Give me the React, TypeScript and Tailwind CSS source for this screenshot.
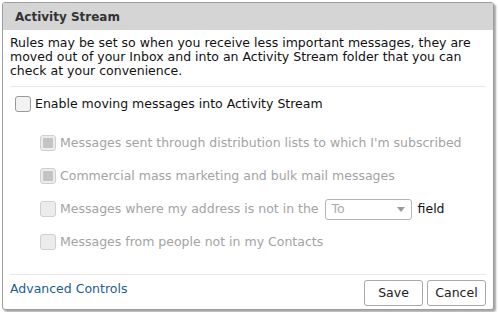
import React from 'react'

function Check({ checked, disabled }: { checked?: boolean; disabled?: boolean }) {
  return (
    <span
      className={
        'flex h-[16px] w-[16px] shrink-0 items-center justify-center rounded-[3px] border ' +
        (disabled ? 'border-[#cfcfcf] bg-[#ececec]' : 'border-[#9a9a9a] bg-[#f2f2f2]')
      }
    >
      {checked && <span className="h-[10px] w-[10px] rounded-[1px] bg-[#c4c4c4]" />}
    </span>
  )
}

function SubRow({ checked, children }: { checked?: boolean; children: React.ReactNode }) {
  return (
    <div className="flex h-[33px] items-center gap-[4px]">
      <Check checked={checked} disabled />
      <span className="text-[#a3a3a3]">{children}</span>
    </div>
  )
}

export default function App() {
  return (
    <div className="h-[312px] w-[499px] bg-white pl-[2px] pt-[2px] text-[12.5px] font-['DejaVu_Sans',sans-serif] text-[#222]">
      <div className="flex h-[308px] w-[492px] flex-col overflow-hidden rounded-[3px] border border-[#9c9c9c] bg-white shadow-[2px_2px_2px_rgba(0,0,0,0.35)]">
        <div className="flex h-[27px] shrink-0 items-center bg-[#d5d5d5] pl-[12px] text-[12px] font-bold text-[#333]">
          Activity Stream
        </div>
        <div className="flex flex-1 flex-col px-[7px]">
          <p className="mt-[6px] leading-[14px] text-[#111]">
            Rules may be set so when you receive less important messages, they are moved out of your
            Inbox and into an Activity Stream folder that you can check at your convenience.
          </p>
          <div className="mt-[8px] border-t border-[#e8e8e8]" />
          <div className="mt-[8px] flex items-center gap-[4px] pl-[5px]">
            <Check />
            <span className="text-[#111]">Enable moving messages into Activity Stream</span>
          </div>
          <div className="mt-[13px] flex flex-col pl-[30px]">
            <SubRow checked>Messages sent through distribution lists to which I'm subscribed</SubRow>
            <SubRow checked>Commercial mass marketing and bulk mail messages</SubRow>
            <div className="flex h-[33px] items-center gap-[4px]">
              <Check disabled />
              <span className="text-[#a3a3a3]">Messages where my address is not in the</span>
              <span className="ml-[2px] flex h-[21px] w-[87px] items-center justify-between rounded-[3px] border border-[#b5b5b5] bg-white pl-[6px] pr-[6px] text-[#aaa]">
                To
                <svg width="8" height="5" viewBox="0 0 8 5">
                  <path d="M0 0h8L4 5z" fill="#999" />
                </svg>
              </span>
              <span className="ml-[2px] text-[#111]">field</span>
            </div>
            <SubRow>Messages from people not in my Contacts</SubRow>
          </div>
          <div className="mt-auto border-t border-[#e8e8e8]" />
          <div className="flex h-[34px] items-start justify-between pt-[5px]">
            <a className="text-[#1c5c94]">Advanced Controls</a>
            <div className="flex gap-[4px]">
              <button className="h-[26px] w-[59px] rounded-[3px] border border-[#a8a8a8] bg-white text-[#222]">
                Save
              </button>
              <button className="h-[26px] w-[59px] rounded-[3px] border border-[#a8a8a8] bg-white text-[#222]">
                Cancel
              </button>
            </div>
          </div>
        </div>
      </div>
    </div>
  )
}
